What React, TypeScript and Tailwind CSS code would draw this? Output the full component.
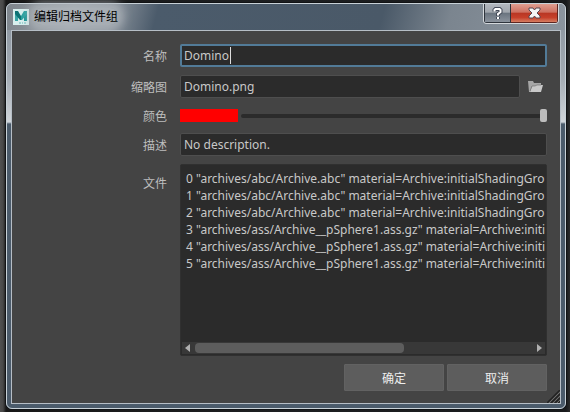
import type { ReactNode } from "react";

const files = [
  '0 "archives/abc/Archive.abc" material=Archive:initialShadingGroup',
  '1 "archives/abc/Archive.abc" material=Archive:initialShadingGroup',
  '2 "archives/abc/Archive.abc" material=Archive:initialShadingGroup',
  '3 "archives/ass/Archive__pSphere1.ass.gz" material=Archive:initialShadingGroup',
  '4 "archives/ass/Archive__pSphere1.ass.gz" material=Archive:initialShadingGroup',
  '5 "archives/ass/Archive__pSphere1.ass.gz" material=Archive:initialShadingGroup',
].join("\n");

const field =
  "h-[23px] w-full min-w-0 rounded-[2px] border border-[#4e4e4e] bg-[#2b2b2b] px-[3px] text-[#c8c8c8] outline-none";

function Row({ id, label, top, children }: { id: string; label: string; top?: boolean; children: ReactNode }) {
  return (
    <div className={top ? "flex items-start gap-[13px]" : "flex items-center gap-[13px]"}>
      <label
        htmlFor={id}
        className={top ? "w-[155px] shrink-0 pt-[11px] text-right" : "w-[155px] shrink-0 pt-px text-right"}
      >
        {label}
      </label>
      <div className="flex min-w-0 flex-1 items-center">{children}</div>
    </div>
  );
}

function MayaLogo() {
  return (
    <svg className="h-4 w-4 shrink-0" viewBox="0 0 16 16" aria-hidden="true">
      <rect width="16" height="16" fill="#d8efee" />
      <path d="M2 2h3v10H2z" fill="#37a5a5" />
      <path d="M11 2h3v10h-3z" fill="#159494" />
      <path d="M2 2h3l3 5v4H7L2 5z" fill="#0d7274" />
      <path d="M14 2h-3L8 7v4h1l5-6z" fill="#27a09f" />
      <path d="M6 14h2M9 14h1M11 14h2" stroke="#65b7b6" strokeWidth="1" />
    </svg>
  );
}

function FolderIcon() {
  return (
    <svg className="h-3 w-[15px]" viewBox="0 0 15 12" aria-hidden="true">
      <path d="M0 0h5l1 2h7v3H4L2 11H1z" fill="#a6a6a6" />
      <path d="M4 5h3l2-1h6l-2 7H2z" fill="#c8c8c8" />
      <path d="M2 10l2-5h3l2-1h4" fill="none" stroke="#6a6a6a" strokeWidth="0.6" />
    </svg>
  );
}

export default function App() {
  return (
    <main className="min-h-screen bg-[linear-gradient(to_right,#505050_0,#484848_3px,#181818_6px,#1d1f21_50%,#181a1c_566px,#2b2b2b_570px)] pt-[2px] pr-[3px] pb-[2px] pl-[5px] font-['Noto_Sans','Noto_Sans_CJK_SC',sans-serif] text-[12px] leading-[17px] text-[#bebebe]">
      <section
        aria-label="编辑归档文件组"
        className="rounded-[7px] border border-[#111315] bg-[linear-gradient(to_bottom,#838c96_0,#929ba5_30px,#a4acb4_75px,#d0d5da_119px,#4b5b6b_121px)]"
      >
        <div className="rounded-[6px] border border-[#c8d1d7] px-[4px] pb-[4px]">
          <header className="-mx-1 flex h-[26px] items-start rounded-t-[5px] bg-[linear-gradient(105deg,#7e858c_0,#9ba2a9_12%,#8b939c_19%,#4b5b6b_27%,#4a5968_67%,#7b858f_79%,#8b949e_100%)] pl-1">
            <div className="flex flex-1 items-center gap-[5px] pt-[4px] pl-[2px]">
              <MayaLogo />
              <h1 className="rounded-lg bg-[#b2b8bd]/70 text-black shadow-[0_0_8px_6px_rgba(178,184,189,0.7)]">
                编辑归档文件组
              </h1>
            </div>
            <div className="mr-[6px] flex h-[20px] overflow-hidden rounded-b-[4px] border border-t-0 border-[#d4d8dc]">
              <button
                aria-label="帮助"
                className="flex w-[27px] items-center justify-center border-r border-b border-l border-[#2e343c] bg-[linear-gradient(to_bottom,#b2b7be_0,#a0a6ad_46%,#69737e_50%,#8b939d_100%)]"
              >
                <svg className="h-[13px] w-[11px]" viewBox="0 0 11 13" aria-hidden="true">
                  <path d="M2.5 4.5V3l1-1h4l1 1v2L6 7v2M6 10v2" fill="none" stroke="#454b59" strokeWidth="4" />
                  <path d="M2.5 4.5V3l1-1h4l1 1v2L6 7v1.5M6 10v2" fill="none" stroke="#fff" strokeWidth="2" />
                </svg>
              </button>
              <button
                aria-label="关闭"
                className="flex w-[47px] items-center justify-center border-r border-b border-[#5f2520] bg-[linear-gradient(to_bottom,#e09e90_0,#cd7060_46%,#b83623_50%,#c6402a_75%,#d67e62_100%)]"
              >
                <svg className="h-[12px] w-[13px]" viewBox="0 0 13 12" aria-hidden="true">
                  <path d="M1 1h4l1.500 2L8 1h4v2L9 6l3 3v2H8L6.500 9 5 11H1V9l3-3-3-3z" fill="#f5f5f5" stroke="#574751" />
                </svg>
              </button>
            </div>
          </header>

          <form
            className="relative border border-[#b6bec6] bg-[#444444] pt-[13px] pr-[13px] pb-3"
            onSubmit={(event) => event.preventDefault()}
          >
            <div className="flex flex-col gap-2">
              <Row id="name" label="名称">
                <div className="relative w-full">
                  <input
                    id="name"
                    defaultValue="Domino"
                    className="block h-[23px] w-full rounded-[2px] border-2 border-[#527b98] bg-[#2b2b2b] px-[2px] text-[#c8c8c8] outline-none"
                  />
                  <span className="absolute top-[3px] left-[50px] h-[17px] w-px bg-[#dddddd]" />
                </div>
              </Row>
              <Row id="thumbnail" label="缩略图">
                <input id="thumbnail" defaultValue="Domino.png" className={field} />
                <button type="button" aria-label="浏览" className="ml-2 flex w-[19px] shrink-0">
                  <FolderIcon />
                </button>
              </Row>
              <Row id="color" label="颜色">
                <div className="flex h-[19px] w-full items-center gap-[3px]">
                  <button type="button" aria-label="红色" className="h-[13px] w-[58px] shrink-0 bg-[#ff0000]" />
                  <input
                    id="color"
                    type="range"
                    defaultValue={100}
                    className="h-[13px] min-w-0 flex-1 appearance-none bg-transparent [&::-webkit-slider-runnable-track]:h-[4px] [&::-webkit-slider-runnable-track]:rounded-full [&::-webkit-slider-runnable-track]:bg-[#2b2b2b] [&::-webkit-slider-thumb]:-mt-[5px] [&::-webkit-slider-thumb]:h-[13px] [&::-webkit-slider-thumb]:w-[7px] [&::-webkit-slider-thumb]:appearance-none [&::-webkit-slider-thumb]:rounded-[2px] [&::-webkit-slider-thumb]:bg-[#bdbdbd]"
                  />
                </div>
              </Row>
              <Row id="description" label="描述">
                <input id="description" defaultValue="No description." className={field} />
              </Row>
              <Row id="files" label="文件" top>
                <div className="w-full rounded-[2px] border border-[#303030] bg-[#2b2b2b] p-px">
                  <textarea
                    id="files"
                    wrap="off"
                    defaultValue={files}
                    className="block h-[176px] w-full resize-none overflow-hidden pt-[4px] pl-[4px] text-[#c8c8c8] outline-none"
                  />
                  <div className="flex h-[12px] items-center gap-[5px] bg-[#383838] px-[3px]">
                    <svg className="h-[8px] w-[5px] shrink-0" viewBox="0 0 5 8" aria-hidden="true">
                      <path d="M5 0v8L0 4z" fill="#b0b0b0" />
                    </svg>
                    <div className="flex-1">
                      <div className="h-[10px] w-[62%] rounded-[4px] bg-[#5d5d5d]" />
                    </div>
                    <svg className="h-[8px] w-[5px] shrink-0" viewBox="0 0 5 8" aria-hidden="true">
                      <path d="M0 0v8l5-4z" fill="#b0b0b0" />
                    </svg>
                  </div>
                </div>
              </Row>
            </div>
            <footer className="mt-2 flex justify-end gap-[3px] text-[#eeeeee]">
              <button className="h-[27px] w-[100px] rounded-[1px] border border-[#626262] bg-[#5d5d5d] pt-px">
                确定
              </button>
              <button
                type="button"
                className="h-[27px] w-[100px] rounded-[1px] border border-[#626262] bg-[#5d5d5d] pt-px"
              >
                取消
              </button>
            </footer>
            <svg className="absolute right-0 bottom-0 h-[13px] w-[13px]" viewBox="0 0 13 13" aria-hidden="true">
              <path d="M0 13 13 0M4 13l9-9M8 13l5-5M11 13l2-2" stroke="#222" strokeWidth="1.5" />
              <path d="M2 13 13 2M6 13l7-7M10 13l3-3" stroke="#777" strokeWidth="0.8" />
            </svg>
          </form>
        </div>
      </section>
    </main>
  );
}
